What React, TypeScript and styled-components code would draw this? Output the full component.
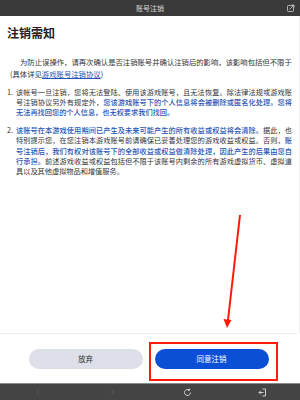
import React from 'react';
import styled, { createGlobalStyle } from 'styled-components';

const GlobalStyle = createGlobalStyle`
  html, body {
    margin: 0;
    padding: 0;
    background: #ffffff;
  }
  body {
    font-family: "Noto Sans CJK SC", "Noto Sans", sans-serif;
  }
`;

const colors = {
  bar: '#3a3a3a',
  text: '#333333',
  blue: '#1f55b5',
  primary: '#0b4fd6',
  cancel: '#dde0e8',
  red: '#ff1a0a',
};

const Page = styled.div`
  position: relative;
  width: 300px;
  height: 400px;
  display: flex;
  flex-direction: column;
  overflow: hidden;
  background: #fff;
`;

const TopBar = styled.div`
  height: 16px;
  flex-shrink: 0;
  background: ${colors.bar};
  display: flex;
  align-items: center;
  justify-content: center;
  position: relative;
  color: #d8d8d8;
  font-size: 7px;
`;

const TopIcon = styled.span`
  position: absolute;
  right: 5px;
  top: 4px;
  display: flex;
`;

const Content = styled.div`
  flex: 1;
  padding: 0 7px 0 7px;
  border-right: 1px solid #eeeeee;
  color: ${colors.text};
`;

const Title = styled.h1`
  margin: 10px 0 0 0;
  font-size: 12px;
  line-height: 14px;
  font-weight: 600;
  color: #222;
`;

const Intro = styled.p`
  margin: 15.5px -1px 0 0;
  padding-left: 3px;
  text-indent: 10px;
  font-size: 7.35px;
  line-height: 12px;
`;

const Link = styled.span`
  color: ${colors.blue};
  text-decoration: underline;
`;

const Item = styled.div<{ $gap: number }>`
  display: flex;
  margin-top: ${(p) => p.$gap}px;
  font-size: 7.2px;
  line-height: 10.4px;
`;

const Num = styled.span`
  width: 9px;
  flex-shrink: 0;
`;

const ItemText = styled.span`
  flex: 1;
  text-align: justify;
`;

const Em = styled.span`
  color: ${colors.blue};
  font-weight: 500;
`;

const Footer = styled.div`
  height: 49px;
  flex-shrink: 0;
  border-top: 1px solid #ececec;
  margin-right: 3px;
  display: flex;
  align-items: center;
  justify-content: center;
  gap: 12px;
`;

const Button = styled.button<{ $primary?: boolean }>`
  width: 114px;
  height: 20px;
  border: none;
  border-radius: 10px;
  padding: 0;
  font-family: inherit;
  font-size: 7.5px;
  background: ${(p) => (p.$primary ? colors.primary : colors.cancel)};
  color: ${(p) => (p.$primary ? '#ffffff' : '#333333')};
`;

const BottomBar = styled.div`
  height: 16px;
  flex-shrink: 0;
  background: #444444;
  border-top: 1px solid #8a8a8a;
  display: grid;
  grid-template-columns: repeat(4, 1fr);
  align-items: center;
  justify-items: center;
`;

const NavIcon = styled.span<{ $dim?: boolean }>`
  display: flex;
  color: ${(p) => (p.$dim ? '#5e5e5e' : '#d0d0d0')};
`;

const Highlight = styled.div`
  position: absolute;
  left: 149px;
  top: 342px;
  width: 125px;
  height: 35px;
  border: 2px solid ${colors.red};
`;

const Arrow = styled.svg`
  position: absolute;
  left: 0;
  top: 0;
  pointer-events: none;
`;

export default function App() {
  return (
    <Page>
      <GlobalStyle />
      <TopBar>
        账号注销
        <TopIcon>
          <svg width="8" height="8" viewBox="0 0 8 8" fill="none" stroke="#bdbdbd" strokeWidth="0.9">
            <rect x="0.5" y="1.5" width="6" height="6" rx="0.8" />
            <path d="M2.5 5.5 L7 1 M4.5 1 H7 V3.5" />
          </svg>
        </TopIcon>
      </TopBar>
      <Content>
        <Title>注销需知</Title>
        <Intro>
          为防止误操作，请再次确认是否注销账号并确认注销后的影响，该影响包括但不限于(具体详见<Link>游戏账号注销协议</Link>)
        </Intro>
        <Item $gap={7}>
          <Num>1.</Num>
          <ItemText>
            该帐号一旦注销，您将无法登陆、使用该游戏账号，且无法恢复。除法律法规或游戏账号注销协议另外有规定外，
            <Em>您该游戏账号下的个人信息将会被删除或匿名化处理。您将无法再找回您的个人信息，也无权要求我们找回。</Em>
          </ItemText>
        </Item>
        <Item $gap={7}>
          <Num>2.</Num>
          <ItemText>
            <Em>该账号在本游戏使用期间已产生及未来可能产生的所有收益或权益将会清除。</Em>
            据此，也特别提示您，在您注销本游戏账号前请确保已妥善处理您的游戏收益或权益。否则，
            <Em>账号注销后，我们有权对该账号下的全部收益或权益做清除处理，因此产生的后果由您自行承担。</Em>
            前述游戏收益或权益包括但不限于该账号内剩余的所有游戏虚拟货币、虚拟道具以及其他虚拟物品和增值服务。
          </ItemText>
        </Item>
      </Content>
      <Footer>
        <Button>放弃</Button>
        <Button $primary>同意注销</Button>
      </Footer>
      <BottomBar>
        <NavIcon $dim>
          <svg width="8" height="8" viewBox="0 0 8 8" fill="none" stroke="currentColor" strokeWidth="1">
            <path d="M5.5 1 L2.5 4 L5.5 7" />
          </svg>
        </NavIcon>
        <NavIcon $dim>
          <svg width="8" height="8" viewBox="0 0 8 8" fill="none" stroke="currentColor" strokeWidth="1">
            <path d="M2.5 1 L5.5 4 L2.5 7" />
          </svg>
        </NavIcon>
        <NavIcon>
          <svg width="9" height="9" viewBox="0 0 9 9" fill="none" stroke="currentColor" strokeWidth="1">
            <path d="M7.5 4.5 A3 3 0 1 1 6.2 2" />
            <path d="M6.6 0.6 V2.4 H4.8" />
          </svg>
        </NavIcon>
        <NavIcon>
          <svg width="9" height="9" viewBox="0 0 9 9" fill="none" stroke="currentColor" strokeWidth="1">
            <path d="M4.5 1 H7.5 V8 H4.5" />
            <path d="M5.5 4.5 H1 M2.8 2.7 L1 4.5 L2.8 6.3" />
          </svg>
        </NavIcon>
      </BottomBar>
      <Highlight />
      <Arrow width="300" height="400" viewBox="0 0 300 400">
        <line x1="240" y1="215" x2="228" y2="320" stroke={colors.red} strokeWidth="2" />
        <path d="M223.5 319 L227 328 L231.5 320 Z" fill={colors.red} />
      </Arrow>
    </Page>
  );
}
